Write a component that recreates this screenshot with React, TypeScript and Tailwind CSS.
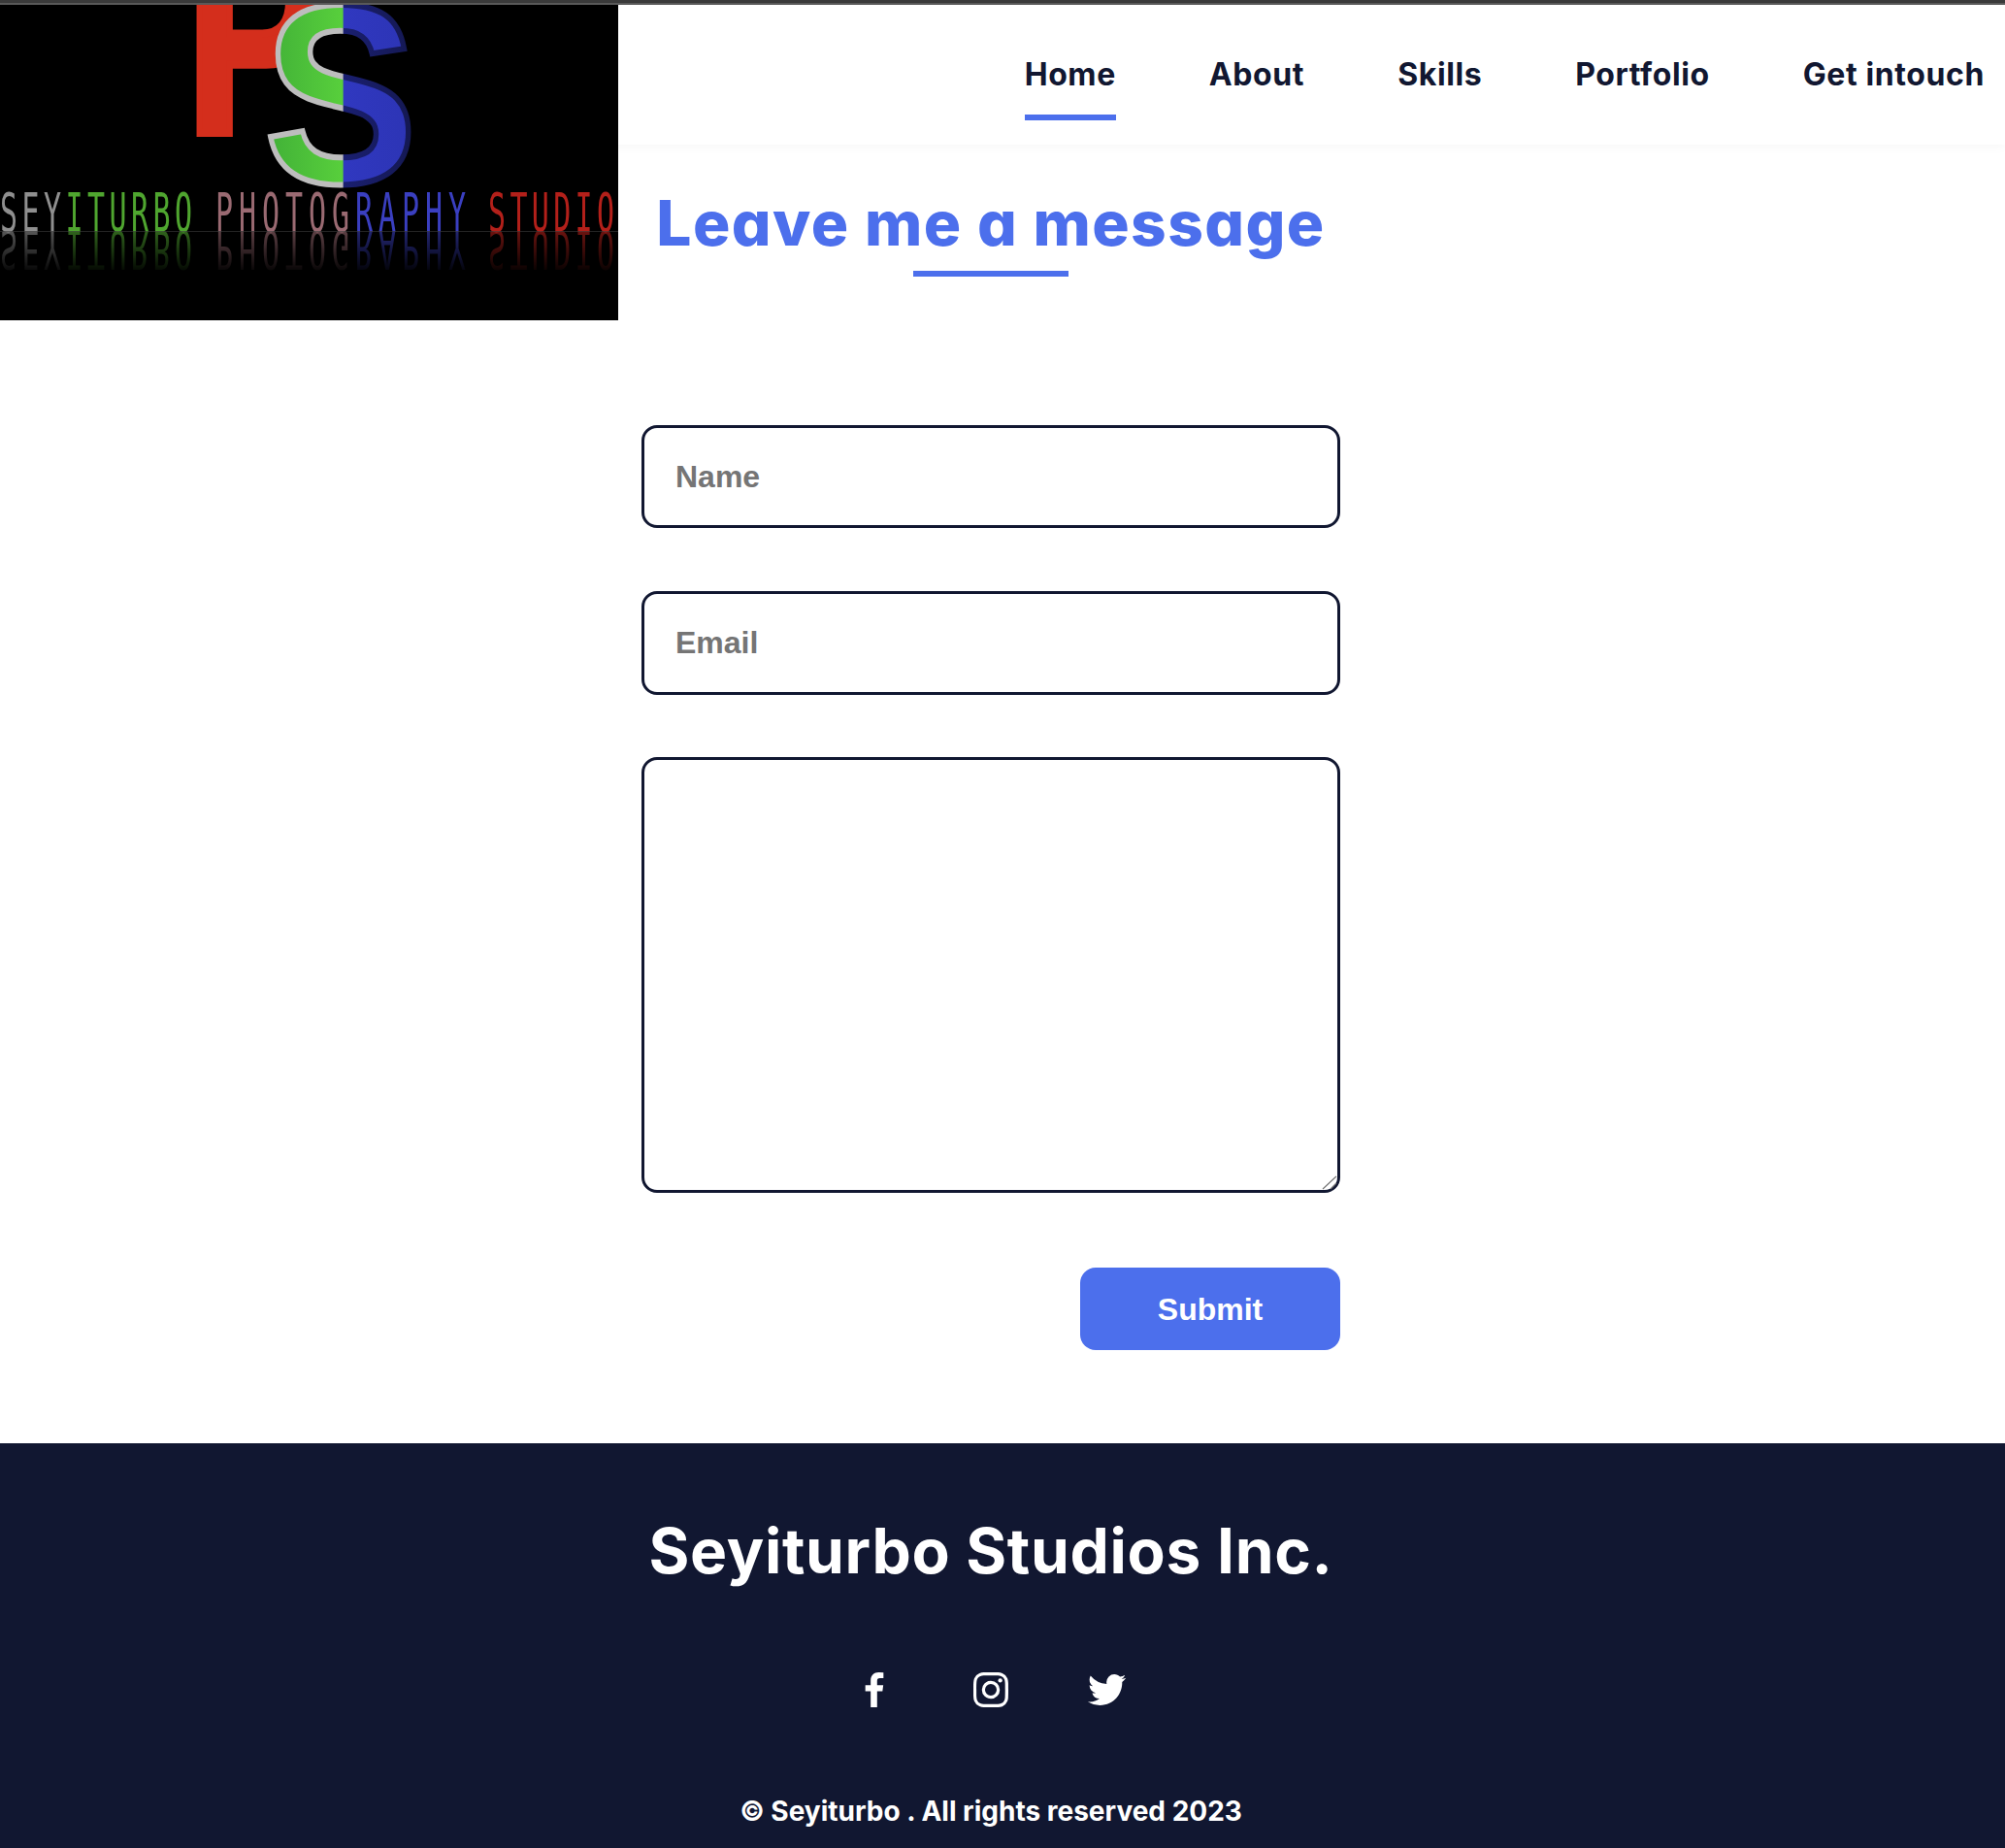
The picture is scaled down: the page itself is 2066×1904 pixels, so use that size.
import { BiLogoFacebook, BiLogoInstagram, BiLogoTwitter } from "react-icons/bi";

const poppins = "font-['Inter','Open_Sans',sans-serif] [font-feature-settings:'cv11','ss03']";

function Logo() {
  return (
    <svg width="637" height="325" viewBox="0 5 637 325" className="block shrink-0 bg-black">
      <defs>
        <linearGradient id="sFill" gradientUnits="userSpaceOnUse" x1="270" x2="430" y1="0" y2="0">
          <stop offset="0" stopColor="#3fae37" />
          <stop offset="0.52" stopColor="#58cf3c" />
          <stop offset="0.525" stopColor="#3038c0" />
          <stop offset="1" stopColor="#2c34b4" />
        </linearGradient>
        <linearGradient id="sEdge" gradientUnits="userSpaceOnUse" x1="270" x2="430" y1="0" y2="0">
          <stop offset="0" stopColor="#bdbdbd" />
          <stop offset="0.52" stopColor="#bdbdbd" />
          <stop offset="0.525" stopColor="#1a1f70" />
          <stop offset="1" stopColor="#141850" />
        </linearGradient>
        <linearGradient id="fade" x1="0" x2="0" y1="0" y2="1">
          <stop offset="0" stopColor="#fff" stopOpacity="0.6" />
          <stop offset="1" stopColor="#fff" stopOpacity="0" />
        </linearGradient>
        <mask id="reflection" maskUnits="userSpaceOnUse" x="0" y="238" width="637" height="45">
          <rect x="0" y="238" width="637" height="45" fill="url(#fade)" />
        </mask>
      </defs>

      <g className="blur-[0.6px]">
        <text
          x="191"
          y="137"
          fontSize="290"
          fontWeight="700"
          fontFamily="Liberation Sans"
          fill="#d42e1c"
          stroke="#d42e1c"
          strokeWidth="8"
          textLength="145"
          lengthAdjust="spacingAndGlyphs"
        >
          P
        </text>
        <text
          x="272"
          y="188"
          fontSize="262"
          fontWeight="700"
          fontFamily="Liberation Sans"
          fill="url(#sFill)"
          stroke="url(#sEdge)"
          strokeWidth="6"
          textLength="158"
          lengthAdjust="spacingAndGlyphs"
        >
          S
        </text>

        <LogoWords />
        <g mask="url(#reflection)">
          <g transform="translate(0 476) scale(1 -1)">
            <LogoWords />
          </g>
        </g>
        <rect x="0" y="238" width="637" height="1" fill="#3a3a3a" opacity="0.6" />
      </g>
    </svg>
  );
}

function LogoWords() {
  return (
    <g transform="translate(0 238) scale(1 1.83)" fontSize="30" className="font-['DejaVu_Sans_Mono',monospace]">
      <text x="0" y="0" textLength="198" lengthAdjust="spacing">
        <tspan fill="#8f8f8f">SEY</tspan>
        <tspan fill="#4fa52f">ITURBO</tspan>
      </text>
      <text x="222" y="0" textLength="258" lengthAdjust="spacing">
        <tspan fill="#9a6a72">PHOTOG</tspan>
        <tspan fill="#3a3fc0">RAPHY</tspan>
      </text>
      <text x="503" y="0" textLength="130" lengthAdjust="spacing" fill="#b3201a">
        STUDIO
      </text>
    </g>
  );
}

function NavLink({ label, active }: { label: string; active?: boolean }) {
  return (
    <a
      href="#"
      className={`block h-[75px] pt-[4px] border-b-[6px] text-[32px] leading-[48px] font-bold tracking-[0.6px] text-[#111731] ${poppins} ${
        active ? "border-[#4c6fec]" : "border-transparent"
      }`}
    >
      {label}
    </a>
  );
}

export default function App() {
  return (
    <div className="min-h-[1904px] bg-white overflow-hidden">
      <div className="h-[3px] bg-[#3a3a3a]" />
      <div className="h-[2px] bg-[#5a5a5a]" />

      <header className="flex justify-between h-[144px] shadow-[0_3px_10px_rgba(0,0,0,0.03)]">
        <Logo />
        <nav className="flex gap-[96px] pr-[21px] pt-[44px]">
          <NavLink label="Home" active />
          <NavLink label="About" />
          <NavLink label="Skills" />
          <NavLink label="Portfolio" />
          <NavLink label="Get intouch" />
        </nav>
      </header>

      <main className="flex justify-center pr-[24px] pb-[96px]">
        <div className="w-[720px] flex flex-col">
          <h2 className={`mt-[33px] text-center text-[64px] leading-[96px] font-extrabold tracking-[1.4px] text-[#4c6fec] ${poppins}`}>
            Leave me a message
          </h2>
          <div className="mt-[1px] mx-auto w-[160px] h-[6px] bg-[#4c6fec]" />

          <form className="mt-[153px] flex flex-col font-['Liberation_Sans',sans-serif]">
            <input
              placeholder="Name"
              className="h-[106px] px-[32px] border-[3px] border-[#111731] rounded-[16px] text-[32px] font-bold placeholder:text-[#757575]"
            />
            <input
              placeholder="Email"
              className="mt-[65px] h-[107px] px-[32px] border-[3px] border-[#111731] rounded-[16px] text-[32px] font-bold placeholder:text-[#757575]"
            />
            <div className="relative mt-[64px]">
              <textarea className="block w-full h-[449px] px-[32px] border-[3px] border-[#111731] rounded-[16px] text-[32px] font-bold resize-none" />
              <svg width="16" height="16" viewBox="0 0 16 16" className="absolute right-[3px] bottom-[3px]">
                <path d="M1 15 L15 2 M9 15 L15 9" stroke="#777" strokeWidth="1.2" fill="none" />
              </svg>
            </div>
            <button
              type="button"
              className="mt-[77px] self-end w-[268px] h-[85px] rounded-[16px] bg-[#4c6fec] text-white text-[32px] font-bold"
            >
              Submit
            </button>
          </form>
        </div>
      </main>

      <footer className="h-[418px] bg-[#111731] text-white">
        <div className="flex flex-col items-center pr-[24px]">
          <h2 className={`mt-[63px] text-[64px] leading-[96px] font-bold tracking-[0.7px] ${poppins}`}>Seyiturbo Studios Inc.</h2>
          <div className="mt-[71px] flex gap-[72px]">
            <BiLogoFacebook size={48} />
            <BiLogoInstagram size={48} />
            <BiLogoTwitter size={48} />
          </div>
          <p className={`mt-[80px] text-[28px] leading-[42px] font-bold ${poppins}`}>
            © Seyiturbo . All rights reserved 2023
          </p>
        </div>
      </footer>
    </div>
  );
}
